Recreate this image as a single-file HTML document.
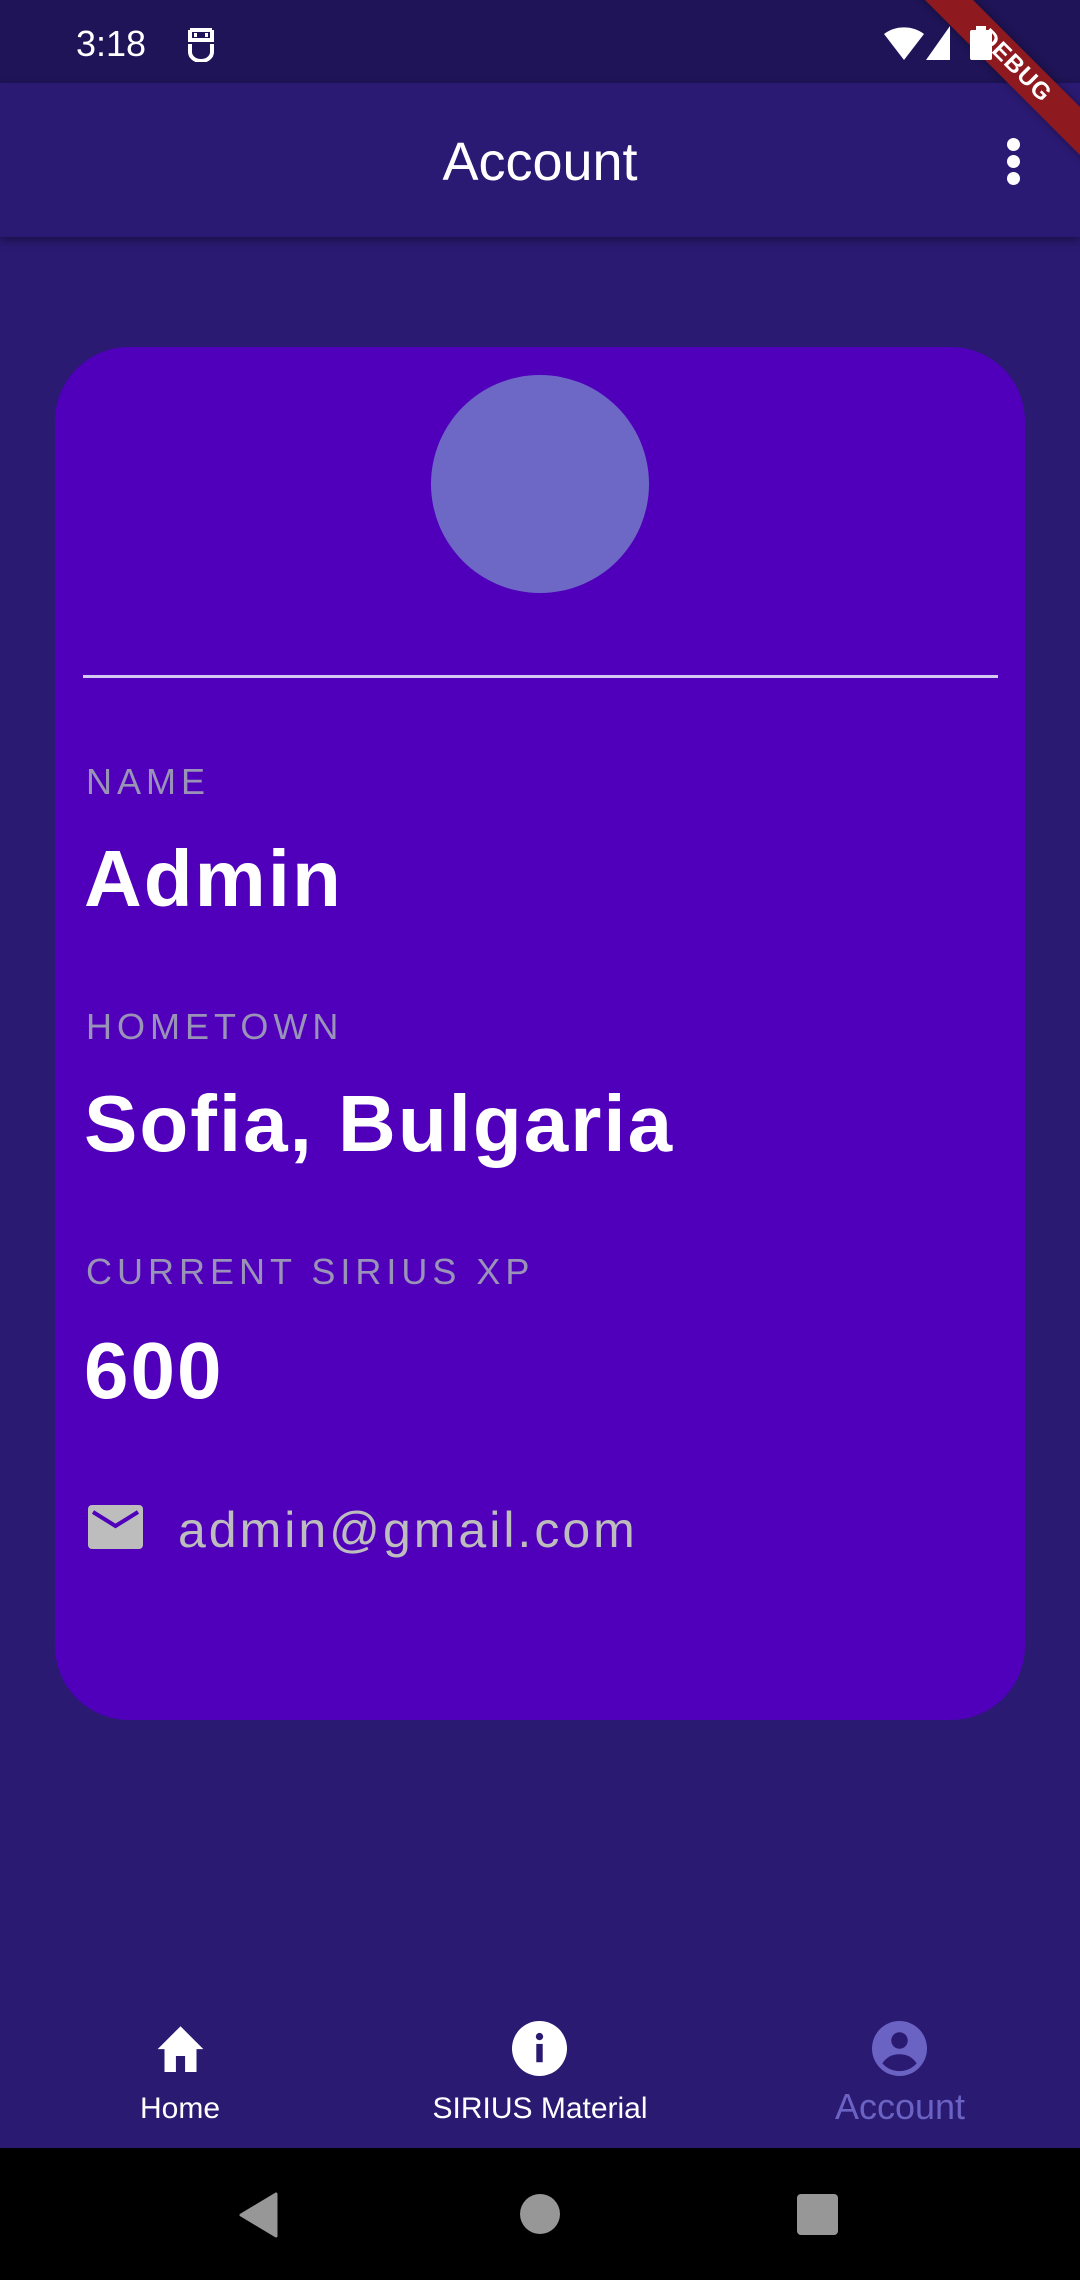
<!DOCTYPE html>
<html><head><meta charset="utf-8"><style>
*{margin:0;padding:0;box-sizing:border-box}
body{width:1080px;height:2280px;background:#2a1a72;position:relative;overflow:hidden;font-family:"Liberation Sans",sans-serif}
.abs{position:absolute}
.lbl{position:absolute;left:86px;color:#9a93b8;font-size:36px;letter-spacing:5px;line-height:1}
.val{position:absolute;left:84px;color:#fff;font-size:80px;font-weight:bold;letter-spacing:2px;line-height:1}
.dot{position:absolute;left:1007px;width:13px;height:13px;border-radius:50%;background:#fff}
</style></head><body>
<div class="abs" style="left:0;top:0;width:1080px;height:83px;background:#1e1457"></div>
<div class="abs" style="left:76px;top:24px;color:#fff;font-size:36px;line-height:40px">3:18</div>
<svg class="abs" style="left:186px;top:26px" width="30" height="36" viewBox="0 0 30 36"><path d="M4 4h22M4 4v10h22v-10M8 9h3M19 9h3M4 18v8a11 9 0 0 0 22 0v-8" fill="none" stroke="#fff" stroke-width="4"/></svg>
<div class="abs" style="left:0;top:83px;width:1080px;height:154px;background:#2b1a73;box-shadow:0 4px 8px rgba(0,0,0,.35)"></div>
<div class="abs" style="left:0;top:132px;width:1080px;text-align:center;color:#fff;font-size:54px;line-height:60px">Account</div>
<div class="dot" style="top:138px"></div>
<div class="dot" style="top:155px"></div>
<div class="dot" style="top:172px"></div>
<div class="abs" style="left:815px;top:49px;width:400px;height:34px;background:#8e1a1f;transform:rotate(45deg);color:#fff;font-weight:bold;font-size:24px;text-align:center;line-height:34px;letter-spacing:1px;box-shadow:0 0 8px rgba(0,0,0,.4)">DEBUG</div>
<svg class="abs" style="left:882px;top:24px;z-index:2" width="140" height="38" viewBox="0 0 140 38"><path d="M2 10A28 22 0 0 1 42 10L22 36Z" fill="#fff"/><path d="M44 36L68 2V36Z" fill="#fff"/><rect x="88" y="6" width="22" height="30" rx="2" fill="#fff"/><rect x="94" y="2" width="10" height="6" fill="#fff"/></svg>

<div class="abs" style="left:55px;top:347px;width:970px;height:1373px;background:#5000bb;border-radius:74px"></div>
<div class="abs" style="left:431px;top:375px;width:218px;height:218px;border-radius:50%;background:#6d68c6"></div>
<div class="abs" style="left:83px;top:675px;width:915px;height:3px;background:#d6c8f4"></div>

<div class="lbl" style="top:764px">NAME</div>
<div class="val" style="top:839px">Admin</div>
<div class="lbl" style="top:1009px">HOMETOWN</div>
<div class="val" style="top:1084px">Sofia, Bulgaria</div>
<div class="lbl" style="top:1254px">CURRENT SIRIUS XP</div>
<div class="val" style="top:1331px">600</div>
<svg class="abs" style="left:88px;top:1505px" width="55" height="44" viewBox="0 0 55 44"><rect width="55" height="44" rx="4" fill="#bdbdbd"/><path d="M5 7L27.5 21L50 7" fill="none" stroke="#5000bb" stroke-width="4"/></svg>
<div class="abs" style="left:178px;top:1500px;color:#bdbdbd;font-size:50px;letter-spacing:3px;line-height:60px">admin@gmail.com</div>

<svg class="abs" style="left:153px;top:2024px" width="55" height="48" viewBox="0 0 24 21"><path d="M10 21v-7h4v7h5v-10h3L12 1 2 11h3v10z" fill="#fff"/></svg>
<div class="abs" style="left:0;top:2092px;width:360px;text-align:center;color:#fff;font-size:30px">Home</div>
<svg class="abs" style="left:512px;top:2021px" width="55" height="55" viewBox="0 0 24 24"><circle cx="12" cy="12" r="12" fill="#fff"/><rect x="10.6" y="10" width="2.8" height="8" fill="#2a1a72"/><circle cx="12" cy="6.8" r="1.6" fill="#2a1a72"/></svg>
<div class="abs" style="left:360px;top:2092px;width:360px;text-align:center;color:#fff;font-size:30px">SIRIUS Material</div>
<svg class="abs" style="left:872px;top:2021px" width="55" height="55" viewBox="0 0 24 24"><circle cx="12" cy="12" r="12" fill="#6b63c4"/><circle cx="12" cy="8.5" r="3.6" fill="#2a1a72"/><path d="M4.5 18.5c2-3 4.5-4 7.5-4s5.5 1 7.5 4a10 10 0 0 1-15 0z" fill="#2a1a72"/></svg>
<div class="abs" style="left:720px;top:2086px;width:360px;text-align:center;color:#6b63c4;font-size:36px">Account</div>

<div class="abs" style="left:0;top:2148px;width:1080px;height:132px;background:#000"></div>
<svg class="abs" style="left:238px;top:2192px" width="42" height="46" viewBox="0 0 42 46"><path d="M38 2V44L3 23Z" fill="#979797" stroke="#979797" stroke-width="3" stroke-linejoin="round"/></svg>
<div class="abs" style="left:520px;top:2194px;width:40px;height:40px;border-radius:50%;background:#979797"></div>
<div class="abs" style="left:797px;top:2194px;width:41px;height:41px;border-radius:4px;background:#979797"></div>
</body></html>
